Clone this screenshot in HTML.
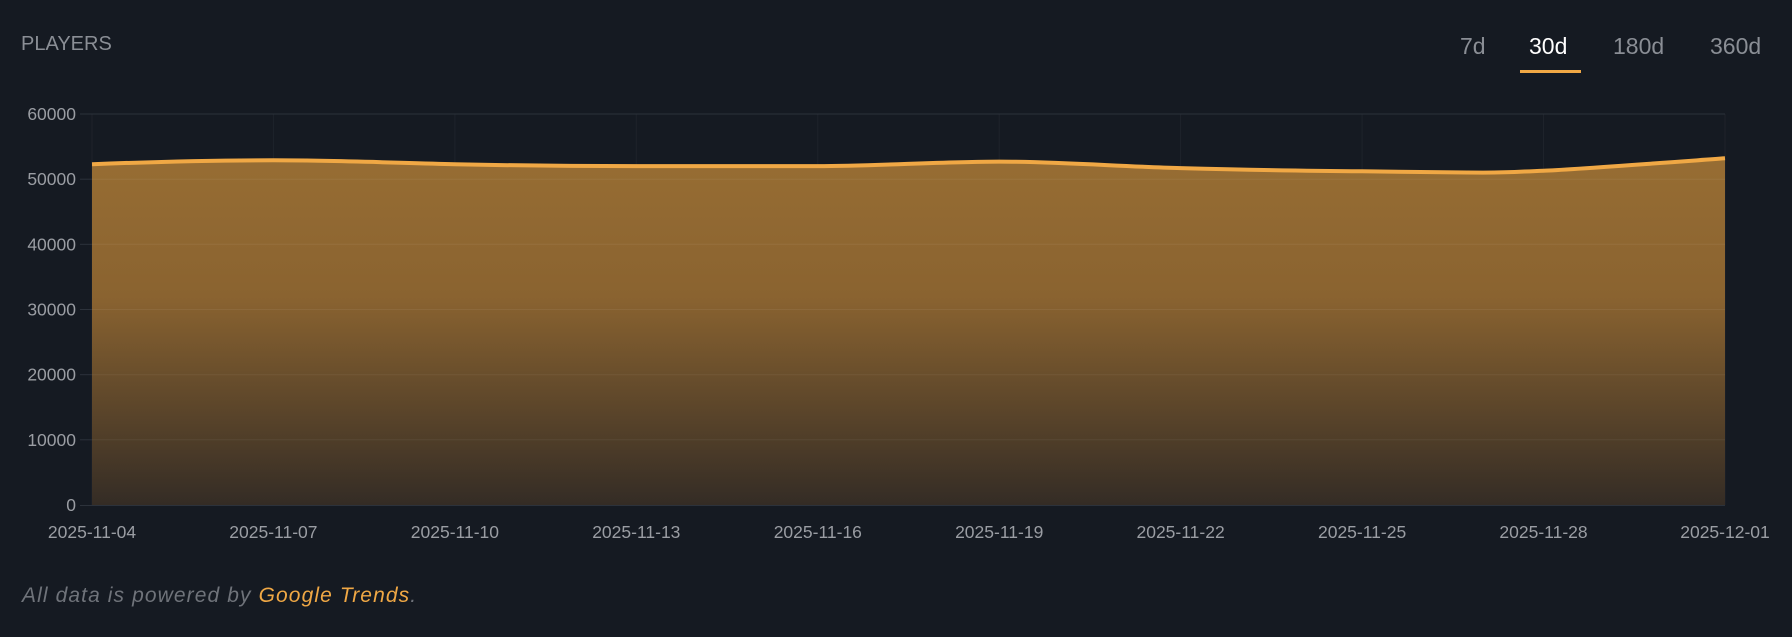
<!DOCTYPE html>
<html><head><meta charset="utf-8"><style>
html,body{margin:0;padding:0;background:#151a22;width:1792px;height:637px;overflow:hidden;font-family:"Liberation Sans",sans-serif}
.t{position:absolute;color:#8a8e95}
</style></head><body>
<div class="t" style="left:21px;top:33px;font-size:20px">PLAYERS</div>
<div class="t" style="left:1460px;top:33px;font-size:23px">7d</div>
<div class="t" style="left:1529px;top:33px;font-size:23px;color:#fff">30d</div>
<div class="t" style="left:1613px;top:33px;font-size:23px">180d</div>
<div class="t" style="left:1710px;top:33px;font-size:23px">360d</div>
<div style="position:absolute;left:1520px;top:70px;width:61px;height:3px;background:#f0a845"></div>
<svg width="1792" height="637" style="position:absolute;left:0;top:0">
<defs><linearGradient id="g" x1="0" y1="0" x2="0" y2="1">
<stop offset="0" stop-color="#976d33"/><stop offset="0.4" stop-color="#8a6330"/><stop offset="1" stop-color="#342c25"/></linearGradient></defs>
<g stroke="#1e232b" stroke-width="1">
<line x1="92" y1="114" x2="92" y2="505"/><line x1="273.4" y1="114" x2="273.4" y2="505"/><line x1="454.9" y1="114" x2="454.9" y2="505"/><line x1="636.3" y1="114" x2="636.3" y2="505"/><line x1="817.8" y1="114" x2="817.8" y2="505"/><line x1="999.2" y1="114" x2="999.2" y2="505"/><line x1="1180.6" y1="114" x2="1180.6" y2="505"/><line x1="1362.1" y1="114" x2="1362.1" y2="505"/><line x1="1543.5" y1="114" x2="1543.5" y2="505"/><line x1="1725" y1="114" x2="1725" y2="505"/>
</g>
<line x1="80" y1="114" x2="1725" y2="114" stroke="#2c323b"/>
<path d="M92,164.2 C150,162 210,160.3 273.4,160.3 S400,163 454.9,164.2 S580,166.1 636.3,166.1 S760,166.1 817.8,166.1 S940,161.6 999.2,161.6 S1120,166.5 1180.6,168.1 S1300,171 1362.1,171.3 S1450,172.6 1483,172.6 S1520,171.5 1543.5,170.7 S1660,163 1725,158.3 L1725,505 L92,505 Z" fill="url(#g)"/>
<g stroke="rgba(255,255,255,0.06)" stroke-width="1">
<line x1="92" y1="179.2" x2="1725" y2="179.2"/><line x1="92" y1="244.3" x2="1725" y2="244.3"/><line x1="92" y1="309.5" x2="1725" y2="309.5"/><line x1="92" y1="374.7" x2="1725" y2="374.7"/><line x1="92" y1="439.8" x2="1725" y2="439.8"/>
</g>
<g stroke="#2c323b" stroke-width="1">
<line x1="80" y1="179.2" x2="92" y2="179.2"/><line x1="80" y1="244.3" x2="92" y2="244.3"/><line x1="80" y1="309.5" x2="92" y2="309.5"/><line x1="80" y1="374.7" x2="92" y2="374.7"/><line x1="80" y1="439.8" x2="92" y2="439.8"/><line x1="80" y1="505.5" x2="1725" y2="505.5"/>
</g>
<path d="M92,164.2 C150,162 210,160.3 273.4,160.3 S400,163 454.9,164.2 S580,166.1 636.3,166.1 S760,166.1 817.8,166.1 S940,161.6 999.2,161.6 S1120,166.5 1180.6,168.1 S1300,171 1362.1,171.3 S1450,172.6 1483,172.6 S1520,171.5 1543.5,170.7 S1660,163 1725,158.3" fill="none" stroke="#f0a845" stroke-width="4"/>
<g fill="#9a9da3" font-size="17.5" font-family="Liberation Sans, sans-serif" text-anchor="end">
<text x="76" y="120">60000</text><text x="76" y="185.2">50000</text><text x="76" y="250.3">40000</text><text x="76" y="315.5">30000</text><text x="76" y="380.7">20000</text><text x="76" y="445.8">10000</text><text x="76" y="511">0</text>
</g>
<g fill="#9a9da3" font-size="17.5" font-family="Liberation Sans, sans-serif" text-anchor="middle">
<text x="92" y="538">2025-11-04</text><text x="273.4" y="538">2025-11-07</text><text x="454.9" y="538">2025-11-10</text><text x="636.3" y="538">2025-11-13</text><text x="817.8" y="538">2025-11-16</text><text x="999.2" y="538">2025-11-19</text><text x="1180.6" y="538">2025-11-22</text><text x="1362.1" y="538">2025-11-25</text><text x="1543.5" y="538">2025-11-28</text><text x="1725" y="538">2025-12-01</text>
</g>
</svg>
<div class="t" style="left:22px;top:584px;font-size:21px;letter-spacing:1.1px;font-style:italic;color:#6f737a">All data is powered by <span style="color:#f0a845">Google Trends</span>.</div>
</body></html>
